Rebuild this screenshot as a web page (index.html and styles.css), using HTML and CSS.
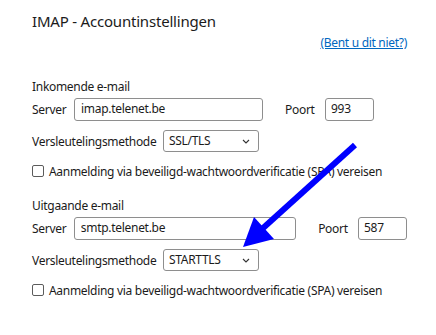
FILE: index.html
```html
<!DOCTYPE html>
<html lang="nl">
<head>
  <meta charset="UTF-8" />
  <title>IMAP - Accountinstellingen</title>
  <meta name="viewport" content="width=device-width, initial-scale=1.0" />
  <link rel="stylesheet" href="styles.css">
</head>
<body>
  <div class="dialog">
    <h1 class="title">IMAP - Accountinstellingen</h1>
    <div class="link-row"><a href="#" class="link">(Bent u dit niet?)</a></div>

    <section class="group">
      <div class="group-label">Inkomende e-mail</div>
      <div class="row">
        <label class="lbl lbl-server">Server</label>
        <input class="field field-server" type="text" value="imap.telenet.be">
        <label class="lbl lbl-port">Poort</label>
        <input class="field field-port" type="text" value="993">
      </div>
      <div class="row row-select">
        <label class="lbl lbl-method">Versleutelingsmethode</label>
        <div class="select">
          <span>SSL/TLS</span>
          <svg class="chevron" width="8" height="5" viewBox="0 0 8 5"><path d="M1 1 L4 4 L7 1" fill="none" stroke="#333" stroke-width="1.1"/></svg>
        </div>
      </div>
      <div class="row row-check">
        <span class="checkbox"></span>
        <span class="check-text">Aanmelding via beveiligd-wachtwoordverificatie (SPA) vereisen</span>
      </div>
    </section>

    <section class="group group-out">
      <div class="group-label">Uitgaande e-mail</div>
      <div class="row">
        <label class="lbl lbl-server">Server</label>
        <input class="field field-server wide" type="text" value="smtp.telenet.be">
        <label class="lbl lbl-port">Poort</label>
        <input class="field field-port" type="text" value="587">
      </div>
      <div class="row row-select">
        <label class="lbl lbl-method">Versleutelingsmethode</label>
        <div class="select">
          <span>STARTTLS</span>
          <svg class="chevron" width="8" height="5" viewBox="0 0 8 5"><path d="M1 1 L4 4 L7 1" fill="none" stroke="#333" stroke-width="1.1"/></svg>
        </div>
      </div>
      <div class="row row-check">
        <span class="checkbox"></span>
        <span class="check-text">Aanmelding via beveiligd-wachtwoordverificatie (SPA) vereisen</span>
      </div>
    </section>

    <!-- annotation arrow drawn over the form -->
    <svg class="arrow" width="436" height="335" viewBox="0 0 436 335">
      <line x1="355" y1="145" x2="262" y2="229" stroke="#0000ff" stroke-width="6"/>
      <polygon points="243,247 274,239 254,217" fill="#0000ff"/>
    </svg>
  </div>
</body>
</html>
```

FILE: styles.css
```css
* { box-sizing: border-box; }
body {
  margin: 0;
  background: #fff;
  color: #1b1b1b;
  font-family: 'Segoe UI', 'Noto Sans', sans-serif;
  font-size: 12px;
  letter-spacing: -0.3px;
}
.dialog {
  position: relative;
  width: 436px;
  height: 335px;
  padding: 10px 29px 0 32px;
}
.title {
  margin: 0;
  font-size: 15px;
  font-weight: normal;
  line-height: 22px;
  letter-spacing: -0.2px;
}
.link-row {
  margin-top: 3px;
  text-align: right;
  line-height: 16px;
}
.link {
  color: #0067c0;
  font-size: 12px;
}
.group { margin-top: 28px; }
.group-out { margin-top: 18px; }
.group-label {
  line-height: 16px;
  margin-bottom: 3px;
}
.row {
  display: flex;
  align-items: center;
  height: 23px;
}
.lbl { white-space: nowrap; }
.lbl-server { width: 42px; }
.lbl-port { width: 40px; margin-left: 22px; }
.lbl-method { width: 131px; }
.field {
  height: 23px;
  border: 1px solid #8e8e8e;
  border-radius: 3px;
  padding: 0 6px 2px;
  font: inherit;
  letter-spacing: inherit;
  color: #1b1b1b;
  outline: none;
}
.field-server { width: 189px; }
.field-server.wide { width: 223px; }
.field-port { width: 49px; padding-left: 5px; }
.row-select { margin-top: 9px; height: 22px; }
.select {
  display: flex;
  align-items: center;
  justify-content: space-between;
  width: 96px;
  height: 22px;
  padding: 0 8px 2px 5px;
  border: 1px solid #8e8e8e;
  border-radius: 3px;
}
.chevron { margin-top: 2px; }
.row-check { margin-top: 10px; height: 18px; }
.checkbox {
  width: 12px;
  height: 12px;
  border: 1px solid #5c5c5c;
  border-radius: 2px;
  margin-right: 5px;
}
.arrow {
  position: absolute;
  left: 0;
  top: 0;
  pointer-events: none;
}
```
